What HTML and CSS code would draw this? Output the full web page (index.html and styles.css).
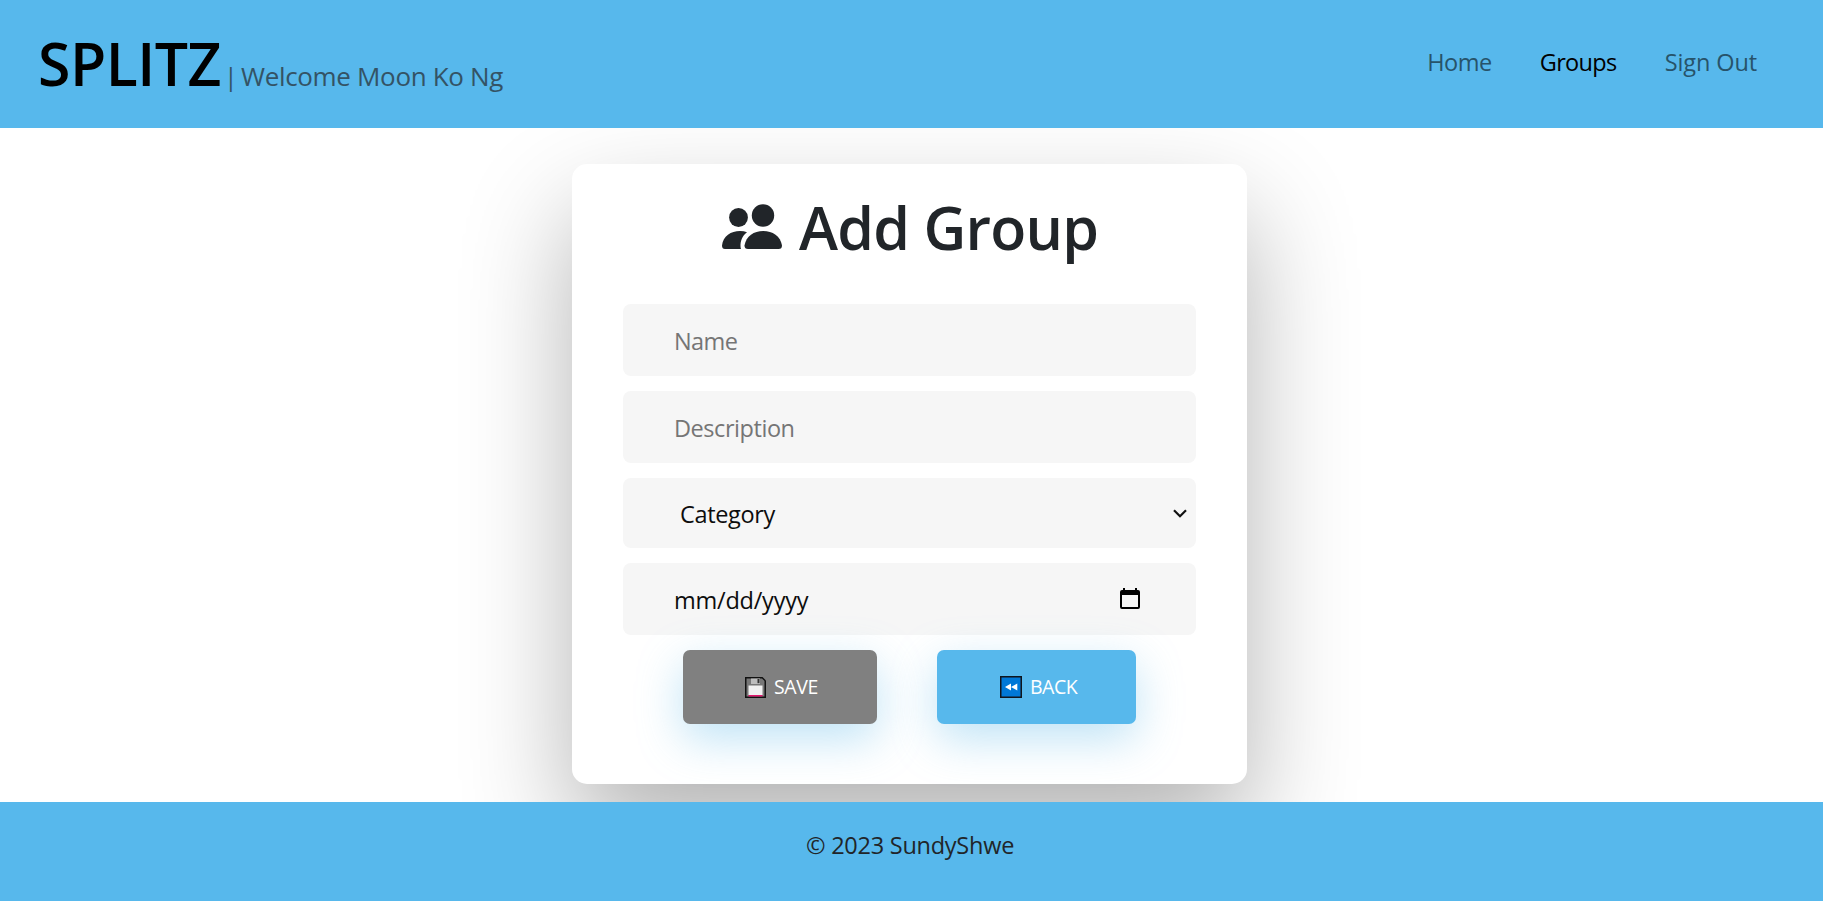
FILE: index.html
```html
<!DOCTYPE html>
<html lang="en">
<head>
<meta charset="utf-8">
<title>Splitz</title>
<link rel="stylesheet" href="styles.css">
</head>
<body>
<header class="navbar">
  <div class="brand"><span class="logo">SPLITZ</span><span class="bar">|</span><span class="welcome">Welcome Moon Ko Ng</span></div>
  <nav class="links">
    <a class="home">Home</a>
    <a class="groups">Groups</a>
    <a class="signout">Sign Out</a>
  </nav>
</header>
<main class="content">
  <form class="card">
    <h1 class="title">
      <svg class="people" viewBox="0 0 60 45"><circle cx="16.500" cy="13.500" r="9.400"/><circle cx="41" cy="11.500" r="11.200"/><path d="M3 45Q0 45 0 41.500C1 32 9 27 18 27Q22 27 25 28.200C20 32 18.500 37 18.500 42Q18.500 43.800 19 45Z"/><path d="M26 45Q22.500 45 22.500 41.500C24 32 32 27 41.200 27C50.500 27 58.500 32 60 41.500Q60 45 56.500 45Z"/></svg>
      <span class="title-text">Add Group</span>
    </h1>
    <input class="field name" type="text" placeholder="Name">
    <input class="field desc" type="text" placeholder="Description">
    <div class="field select"><span class="cat">Category</span>
      <svg class="chevron" viewBox="0 0 14 9"><path d="M1 1.200L7 7.200L13 1.200" fill="none" stroke="#111" stroke-width="2.200"/></svg>
    </div>
    <div class="field date"><span class="fmt">mm/dd/yyyy</span>
      <svg class="calendar" viewBox="0 0 20 21"><path fill-rule="evenodd" d="M3 0H5V2H15V0H17V2H18Q20 2 20 4V19Q20 21 18 21H2Q0 21 0 19V4Q0 2 2 2H3ZM2 7V19H18V7Z"/></svg>
    </div>
    <div class="actions">
      <button class="btn save" type="button">
        <svg class="floppy" viewBox="0 0 21 21"><path fill="#111" d="M0 0H17.500L21 3.500V21H0Z"/><path fill="#777" d="M1.500 1.500H17L19.500 4V19.500H1.500Z"/><path fill="#bdbdbd" d="M6 1.500H15V7H6Z"/><path fill="#333" d="M12.500 2H14.500V6.200H12.500Z"/><path fill="#f1f1f1" d="M3.500 8.500H17.500V18H3.500Z"/><path fill="#e3146c" d="M3.500 18H17.500V19.500H3.500Z"/></svg>
        <span class="save-text">SAVE</span>
      </button>
      <button class="btn back" type="button">
        <svg class="rewind" viewBox="0 0 22 22"><path fill="#10151c" d="M0 0H22V22H0Z"/><path fill="#0078d7" d="M1.500 1.500H20.500V20.500H1.500Z"/><path fill="#fff" d="M5 11L11 7.500V14.500ZM11 11L17.300 7.500V14.500Z"/></svg>
        <span class="back-text">BACK</span>
      </button>
    </div>
  </form>
</main>
<footer class="footer"><span class="copy">© 2023 SundyShwe</span></footer>
</body>
</html>
```
FILE: styles.css
```css
* { box-sizing: border-box; }
body {
  margin: 0;
  height: 901px;
  display: flex;
  flex-direction: column;
  overflow: hidden;
  background: #fff;
  color: #212529;
  font: 23.5px/36px "Open Sans", "Noto Sans", sans-serif;
  white-space: nowrap;
}
.navbar {
  height: 128px;
  flex: none;
  padding: 0 66px 0 38px;
  display: flex;
  justify-content: space-between;
  background: #57b8ec;
  position: relative;
}
.brand { display: flex; align-items: baseline; padding-top: 18px; }
.logo { font-size: 59px; line-height: 90px; font-weight: 600; color: #000; width: 186px; letter-spacing: -.5px; }
.bar { color: #345365; width: 17px; font-size: 25px; }
.welcome { color: #345365; font-size: 26px; letter-spacing: -.33px; }
.links { display: flex; padding-top: 44px; color: #27536a; }
.home { letter-spacing: -.5px; margin-right: 48px; }
.groups { color: #000; letter-spacing: -.65px; margin-right: 48px; }
.signout { letter-spacing: -.1px; }
.content { flex: none; height: 674px; padding-top: 36px; display: flex; justify-content: center; align-items: flex-start; padding-right: 4px; }
.card {
  width: 675px;
  height: 620px;
  padding: 24px 51px 0;
  display: flex;
  flex-direction: column;
  border-radius: 15px;
  background: #fff;
  box-shadow: 0 50px 110px rgba(0, 0, 0, .3);
}
.title { margin: 0 0 36px; height: 80px; display: flex; padding-left: 99px; font-size: 59px; line-height: 78px; font-weight: 600; }
.title-text { letter-spacing: -.8px; }
.people { width: 60px; height: 45px; margin: 16px 17px 0 0; fill: #212529; }
.field {
  width: 573px;
  height: 72px;
  flex: none;
  margin: 0 0 15px;
  padding: 2px 51px 0;
  border: 0;
  border-radius: 8px;
  background: #f6f6f6;
  color: #0d0d0d;
  font: inherit;
}
.field::placeholder { color: #757575; opacity: 1; }
.name { letter-spacing: -.6px; }
.desc { letter-spacing: -.45px; }
.cat { letter-spacing: -.35px; }
.fmt { letter-spacing: -.23px; }
.select { height: 70px; padding: 18px 9px 0 57px; display: flex; justify-content: space-between; }
.chevron { width: 14px; height: 9px; margin-top: 13px; }
.date { padding: 19px 56px 0 51px; display: flex; justify-content: space-between; }
.calendar { width: 20px; height: 21px; margin-top: 6px; }
.actions { display: flex; gap: 60px; padding-left: 60px; }
.btn {
  height: 74px;
  padding: 0;
  border: 0;
  border-radius: 7px;
  display: flex;
  color: #fff;
  font: 19.5px/27px "Open Sans", "Noto Sans", sans-serif;
  box-shadow: 0 15px 45px rgba(95, 186, 233, .4);
  align-items: flex-start;
}
.save { width: 194px; padding: 23px 0 0 62px; background: #808080; letter-spacing: -.4px; }
.back { width: 199px; padding: 23px 0 0 63px; background: #57b8ec; letter-spacing: -.5px; }
.floppy { width: 21px; height: 21px; margin: 4px 8px 0 0; }
.rewind { width: 22px; height: 22px; margin: 3px 8px 0 0; }
.footer { flex: 1; background: #57b8ec; padding: 25px 0 0 806px; position: relative; }
.copy { letter-spacing: -.25px; }
```
